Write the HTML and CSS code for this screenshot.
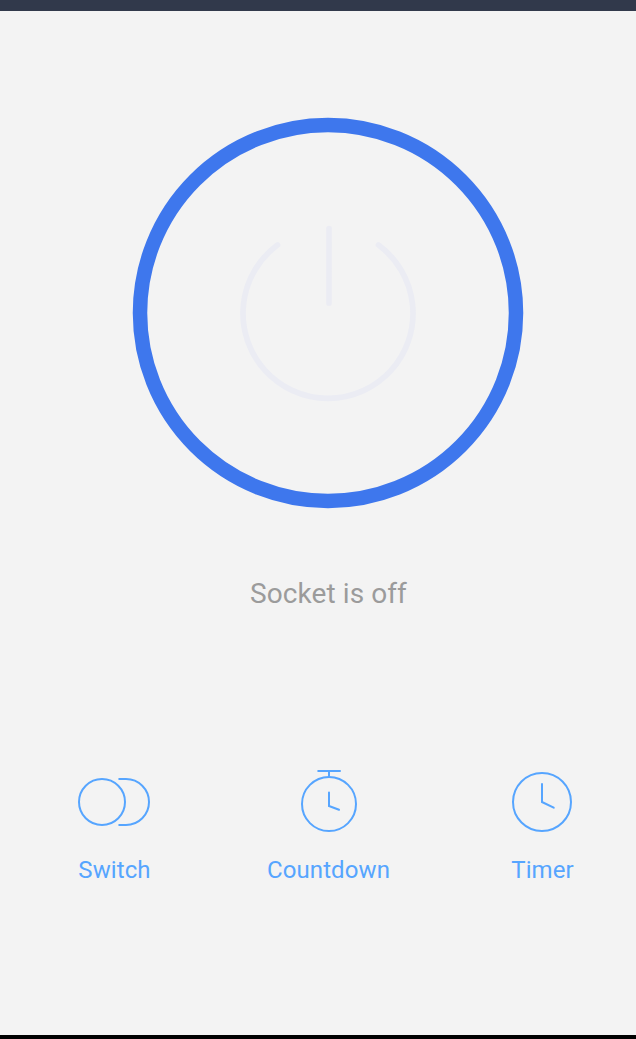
FILE: index.html
```html
<!DOCTYPE html>
<html lang="en">
<head>
<meta charset="utf-8">
<title>Socket</title>
<link rel="stylesheet" href="styles.css">
</head>
<body>
<div class="screen">
  <header class="topbar"></header>
  <main class="panel">
    <svg class="power" viewBox="0 0 392 392" role="img" aria-label="Power">
      <circle class="power-ring" cx="196" cy="196" r="188"/>
      <path class="power-symbol" d="M145.5 128A85 85 0 1 0 246.5 128M197 111.5V186"/>
    </svg>
    <p class="status">Socket is off</p>
    <nav class="actions">
      <div class="action">
        <svg class="icon" viewBox="0 0 72 72"><circle cx="24" cy="37" r="23"/><path d="M41.2 14H48a23 23 0 0 1 0 46H41.2"/></svg>
        <span class="label">Switch</span>
      </div>
      <div class="action">
        <svg class="icon" viewBox="0 0 72 72"><circle cx="37" cy="39" r="27"/><path d="M26.2 6H48M37 6V12M37 27.5V41L47 44.8"/></svg>
        <span class="label">Countdown</span>
      </div>
      <div class="action">
        <svg class="icon" viewBox="0 0 72 72"><circle cx="36" cy="37" r="29"/><path d="M36 19V37L47.7 42.7"/></svg>
        <span class="label">Timer</span>
      </div>
    </nav>
  </main>
  <footer class="bottombar"></footer>
</div>
</body>
</html>
```
FILE: styles.css
```css
body {
  margin: 0;
  background: #f3f3f3;
  font-family: Roboto, sans-serif;
}
.screen {
  display: flex;
  flex-direction: column;
  width: 636px;
  height: 1039px;
  overflow: hidden;
}
.topbar {
  flex: 0 0 11px;
  background: #31394b;
}
.panel {
  flex: 1;
  display: flex;
  flex-direction: column;
  align-items: center;
  width: 642px;
  padding: 106px 0 0 7px;
}
.power {
  display: block;
  width: 392px;
  height: 392px;
  fill: none;
}
.power-ring {
  stroke: #3e77ed;
  stroke-width: 14.5;
}
.power-symbol {
  stroke: #ebecf3;
  stroke-width: 5.7;
  stroke-linecap: round;
}
.status {
  margin: 68px 0 0;
  padding-left: 1px;
  font-size: 28px;
  line-height: 33px;
  letter-spacing: 0.08px;
  color: #9b9b9b;
}
.actions {
  display: grid;
  grid-template-columns: repeat(3, 214px);
  margin-top: 155px;
}
.action {
  display: flex;
  flex-direction: column;
  align-items: center;
  gap: 19px;
}
.icon {
  display: block;
  width: 72px;
  height: 72px;
  fill: none;
  stroke: #56a5ff;
  stroke-width: 2;
  stroke-linecap: round;
}
.label {
  padding-left: 1px;
  font-size: 24px;
  line-height: 28px;
  letter-spacing: 0.1px;
  color: #56a5ff;
}
.bottombar {
  flex: 0 0 4px;
  background: #000;
}
```
